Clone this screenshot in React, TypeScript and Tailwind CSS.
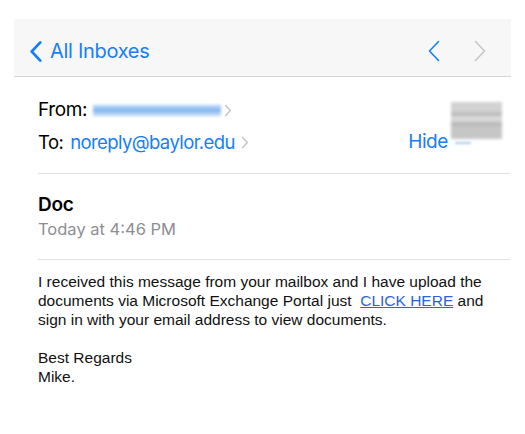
import React from "react";

const SF = { fontFamily: "Inter, 'Noto Sans', sans-serif" };

function Chevron({
  dir,
  className,
  strokeWidth = 2,
}: {
  dir: "left" | "right";
  className?: string;
  strokeWidth?: number;
}) {
  return (
    <svg viewBox="0 0 12 22" className={className} fill="none" aria-hidden="true">
      <path
        d={dir === "left" ? "M10.5 1.5 L1.5 11 L10.5 20.5" : "M1.5 1.5 L10.5 11 L1.5 20.5"}
        stroke="currentColor"
        strokeWidth={strokeWidth}
        strokeLinecap="round"
        strokeLinejoin="round"
      />
    </svg>
  );
}

function SmallChevron() {
  return (
    <svg viewBox="0 0 8 14" className="h-[13px] w-[8px] text-[#c4c4c7]" fill="none" aria-hidden="true">
      <path d="M1.5 1.5 L6.5 7 L1.5 12.5" stroke="currentColor" strokeWidth={1.6} strokeLinecap="round" strokeLinejoin="round" />
    </svg>
  );
}

export default function App() {
  return (
    <div className="min-h-[434px] w-[525px] bg-white" style={SF}>
      <div className="px-[14px] pt-[19px]">
        <div className="flex h-[58px] items-center border-b border-[#d6d6d6] bg-[#f7f7f7] pl-[15px] pr-[25px] pt-[7px]">
          <Chevron dir="left" strokeWidth={2.8} className="h-[21px] w-[14px] text-[#157efb]" />
          <span className="ml-[7px] text-[20px] tracking-[-0.3px] text-[#157efb]">All Inboxes</span>
          <div className="ml-auto flex items-center gap-[34px]">
            <Chevron dir="left" strokeWidth={1.6} className="h-[22px] w-[12px] text-[#157efb]" />
            <Chevron dir="right" strokeWidth={1.6} className="h-[22px] w-[12px] text-[#c7c7cc]" />
          </div>
        </div>
      </div>

      <div className="pl-[38px] pr-[15px]">
        <div className="flex items-start border-b border-[#e0e0e0] pb-[19px] pt-[21px]">
          <div className="flex flex-col gap-[8px]">
            <div className="flex h-[24px] items-center text-[19px] leading-[24px] tracking-[-0.4px] text-black">
              <span>From:</span>
              <div className="ml-[6px] h-[11px] w-[128px] blur-[1.5px]">
                <div className="h-[4px] bg-[#a9cdf5]" />
                <div className="h-[3px] bg-[#7fb2ee]" />
                <div className="h-[4px] bg-[#b5d4f6]" />
              </div>
              <span className="ml-[3px]">
                <SmallChevron />
              </span>
            </div>
            <div className="flex h-[24px] items-center text-[18.5px] leading-[24px] tracking-[-0.6px]">
              <span className="text-black">To:</span>
              <span className="ml-[7px] text-[#157efb]">noreply@baylor.edu</span>
              <span className="ml-[6px]">
                <SmallChevron />
              </span>
            </div>
          </div>
          <div className="ml-auto mr-[8px] flex items-start">
            <span className="mt-[32px] text-[19px] leading-[24px] tracking-[-0.4px] text-[#157efb]">Hide</span>
            <div className="ml-[3px] mt-[4px] flex flex-col">
              <div className="h-[37px] w-[51px] blur-[1.5px]">
                <div className="h-[10px] bg-[#d2d2d2]" />
                <div className="h-[4px] bg-[#bdbdbd]" />
                <div className="h-[6px] bg-[#d8d8d8]" />
                <div className="h-[4px] bg-[#b9b9b9]" />
                <div className="h-[13px] bg-[#c6c6c6]" />
              </div>
              <div className="ml-[4px] mt-[3px] h-[2px] w-[16px] bg-[#a9cdf5] blur-[1px]" />
            </div>
          </div>
        </div>

        <div className="border-b border-[#e0e0e0] pb-[19px] pt-[19px]">
          <div className="text-[19px] font-semibold leading-[24px] tracking-[-0.3px] text-black">Doc</div>
          <div className="mt-[1px] text-[16.5px] leading-[22px] text-[#8e8e93]">Today at 4:46 PM</div>
        </div>

        <div
          className="pt-[12px] text-[15.5px] leading-[19px] text-[#111]"
          style={{ fontFamily: "'Liberation Sans', Arial, sans-serif" }}
        >
          <p>
            I received this message from your mailbox and I have upload the documents via Microsoft Exchange Portal
            just&nbsp;{" "}
            <a href="#" className="text-[#2a64d8] underline">
              CLICK HERE
            </a>{" "}
            and sign in with your email address to view documents.
          </p>
          <p className="mt-[19px]">
            Best Regards
            <br />
            Mike.
          </p>
        </div>
      </div>
    </div>
  );
}
